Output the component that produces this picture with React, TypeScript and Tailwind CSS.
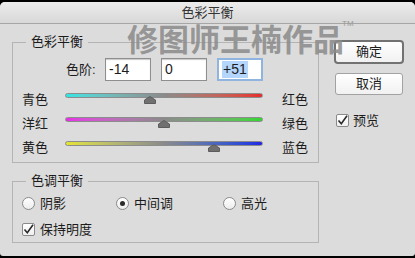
import React from "react";

const sliders = [
  {
    left: "青色",
    right: "红色",
    value: -14,
    track: "bg-linear-to-r from-[#2ee4e4] via-[#8a8a8a] to-[#e62a2a]",
  },
  {
    left: "洋红",
    right: "绿色",
    value: 0,
    track: "bg-linear-to-r from-[#e62ee6] via-[#8a8a8a] to-[#2ed62e]",
  },
  {
    left: "黄色",
    right: "蓝色",
    value: 51,
    track: "bg-linear-to-r from-[#e4e42e] via-[#8a8a8a] to-[#2424e6]",
  },
];

function Thumb() {
  return (
    <svg width="12" height="8" viewBox="0 0 12 8">
      <path d="M0.5 7.5 V4 L6 0.5 L11.5 4 V7.5 Z" fill="#707070" stroke="#5c5c5c" />
    </svg>
  );
}

function Slider({ value, track }: { value: number; track: string }) {
  const pct = ((value + 100) / 200) * 100;
  return (
    <div className="relative h-[14px] w-[198px]">
      <div className={`h-[5px] w-full rounded-full border border-[#8c8c8c] ${track}`} />
      <div
        className="absolute top-[3px] -ml-[6px] flex"
        style={{ left: `${pct}%` }}
      >
        <Thumb />
      </div>
    </div>
  );
}

function Checkbox() {
  return (
    <div className="flex h-[13px] w-[13px] items-center justify-center rounded-[2px] border border-[#8a8a8a] bg-linear-to-b from-white to-[#f0f0f0]">
      <svg width="11" height="11" viewBox="0 0 11 11">
        <path d="M1.5 5.5 L4.3 8.8 L10 0.8" fill="none" stroke="#2a2a2a" strokeWidth="1.6" />
      </svg>
    </div>
  );
}

function Radio({ on }: { on?: boolean }) {
  return (
    <div className="flex h-[13px] w-[13px] items-center justify-center rounded-full border border-[#8a8a8a] bg-linear-to-b from-white to-[#ededed]">
      {on && <div className="h-[5px] w-[5px] rounded-full bg-[#2a2a2a]" />}
    </div>
  );
}

function Field({ value, focus }: { value: string; focus?: boolean }) {
  return (
    <div
      className={`flex h-[23px] w-[46px] items-center bg-white pl-[3px] text-[14px] ${
        focus
          ? "border-2 border-[#8fb4e0] pl-[2px]"
          : "border border-[#8e8e8e] shadow-[inset_0_1px_1px_#c8c8c8]"
      }`}
    >
      {focus ? <span className="bg-[#b4d5fc] px-[1px] leading-[17px]">{value}</span> : value}
    </div>
  );
}

export default function App() {
  return (
    <div className="h-[258px] w-[415px] bg-black pt-[2px] font-['Liberation_Sans','Noto_Sans_CJK_SC',sans-serif] text-[13px] text-[#1c1c1c]">
      <div className="relative h-[254px] overflow-hidden rounded-t-[5px] rounded-b-[3px] bg-[#dcdcdc]">
        {/* title bar */}
        <div className="flex h-[22px] items-center justify-center border-b border-[#a6a6a6] bg-linear-to-b from-[#ececec] to-[#d8d8d8] text-[13px] text-[#333]">
          色彩平衡
        </div>

        <div className="flex pl-[12px]">
          <div className="flex w-[307px] flex-col">
            {/* color balance group */}
            <fieldset className="mt-[9px] border border-[#b4b4b4]">
              <legend className="ml-[13px] px-[5px] leading-[18px]">色彩平衡</legend>
              <div className="flex flex-col pt-[7px] pb-[7px] pl-[9px]">
                <div className="ml-[44px] flex items-center">
                  <span className="w-[39px]">色阶:</span>
                  <div className="flex gap-[10px]">
                    <Field value="-14" />
                    <Field value="0" />
                    <Field value="+51" focus />
                  </div>
                </div>
                <div className="mt-[12px] flex flex-col gap-[10px]">
                  {sliders.map((s) => (
                    <div key={s.left} className="flex h-[14px] items-center">
                      <span className="w-[43px] leading-[14px]">{s.left}</span>
                      <Slider value={s.value} track={s.track} />
                      <span className="ml-[19px] leading-[14px]">{s.right}</span>
                    </div>
                  ))}
                </div>
              </div>
            </fieldset>

            {/* tone balance group */}
            <fieldset className="mt-[9px] border border-[#b4b4b4]">
              <legend className="ml-[13px] px-[5px] leading-[18px]">色调平衡</legend>
              <div className="flex flex-col pt-[7px] pb-[6px] pl-[9px]">
                <div className="flex h-[13px] items-center">
                  <div className="flex w-[94px] items-center gap-[5px]">
                    <Radio />
                    <span>阴影</span>
                  </div>
                  <div className="flex w-[107px] items-center gap-[5px]">
                    <Radio on />
                    <span>中间调</span>
                  </div>
                  <div className="flex items-center gap-[5px]">
                    <Radio />
                    <span>高光</span>
                  </div>
                </div>
                <div className="mt-[13px] flex h-[13px] items-center gap-[5px]">
                  <Checkbox />
                  <span>保持明度</span>
                </div>
              </div>
            </fieldset>
          </div>

          {/* buttons */}
          <div className="ml-[15px] flex flex-col pt-[16px]">
            <button className="flex h-[24px] w-[70px] items-center justify-center rounded-[4px] border-2 border-[#727272] bg-linear-to-b from-white to-[#f1f1f1]">
              确定
            </button>
            <button className="mt-[9px] ml-[1px] flex h-[22px] w-[68px] items-center justify-center rounded-[3px] border border-[#a2a2a2] bg-linear-to-b from-white to-[#f1f1f1]">
              取消
            </button>
            <div className="mt-[16px] ml-[2px] flex items-center gap-[4px]">
              <Checkbox />
              <span>预览</span>
            </div>
          </div>
        </div>

        {/* watermark */}
        <div className="pointer-events-none absolute top-[20px] left-[127px] font-['Noto_Sans_CJK_SC',sans-serif] text-[31px] leading-none font-bold text-[#8a8a8a]/85">
          修图师王楠作品
        </div>
        <div className="pointer-events-none absolute top-[16px] left-[342px] text-[8px] text-[#9a9a9a]">
          TM
        </div>
      </div>
    </div>
  );
}
